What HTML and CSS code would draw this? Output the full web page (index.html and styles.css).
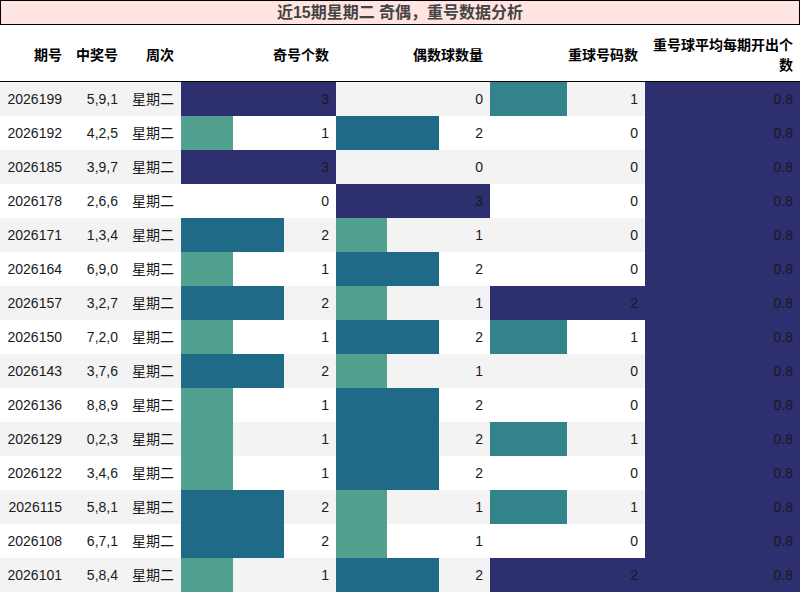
FILE: index.html
```html
<!DOCTYPE html>
<html lang="zh">
<head>
<meta charset="utf-8">
<link rel="stylesheet" href="styles.css">
</head>
<body>
<div class="title">近15期星期二 奇偶，重号数据分析</div>
<table class="grid">
<colgroup>
<col class="w1"><col class="w2"><col class="w3"><col class="w4"><col class="w5"><col class="w6"><col class="w7">
</colgroup>
<thead>
<tr><th>期号</th><th>中奖号</th><th>周次</th><th>奇号个数</th><th>偶数球数量</th><th>重球号码数</th><th>重号球平均每期开出个数</th></tr>
</thead>
<tbody>
<tr><td>2026199</td><td>5,9,1</td><td>星期二</td><td class="bar navy" style="--w:100%">3</td><td>0</td><td class="bar teal" style="--w:50%">1</td><td class="bar navy" style="--w:100%">0.8</td></tr>
<tr><td>2026192</td><td>4,2,5</td><td>星期二</td><td class="bar green" style="--w:33.333%">1</td><td class="bar blue" style="--w:66.667%">2</td><td>0</td><td class="bar navy" style="--w:100%">0.8</td></tr>
<tr><td>2026185</td><td>3,9,7</td><td>星期二</td><td class="bar navy" style="--w:100%">3</td><td>0</td><td>0</td><td class="bar navy" style="--w:100%">0.8</td></tr>
<tr><td>2026178</td><td>2,6,6</td><td>星期二</td><td>0</td><td class="bar navy" style="--w:100%">3</td><td>0</td><td class="bar navy" style="--w:100%">0.8</td></tr>
<tr><td>2026171</td><td>1,3,4</td><td>星期二</td><td class="bar blue" style="--w:66.667%">2</td><td class="bar green" style="--w:33.333%">1</td><td>0</td><td class="bar navy" style="--w:100%">0.8</td></tr>
<tr><td>2026164</td><td>6,9,0</td><td>星期二</td><td class="bar green" style="--w:33.333%">1</td><td class="bar blue" style="--w:66.667%">2</td><td>0</td><td class="bar navy" style="--w:100%">0.8</td></tr>
<tr><td>2026157</td><td>3,2,7</td><td>星期二</td><td class="bar blue" style="--w:66.667%">2</td><td class="bar green" style="--w:33.333%">1</td><td class="bar navy" style="--w:100%">2</td><td class="bar navy" style="--w:100%">0.8</td></tr>
<tr><td>2026150</td><td>7,2,0</td><td>星期二</td><td class="bar green" style="--w:33.333%">1</td><td class="bar blue" style="--w:66.667%">2</td><td class="bar teal" style="--w:50%">1</td><td class="bar navy" style="--w:100%">0.8</td></tr>
<tr><td>2026143</td><td>3,7,6</td><td>星期二</td><td class="bar blue" style="--w:66.667%">2</td><td class="bar green" style="--w:33.333%">1</td><td>0</td><td class="bar navy" style="--w:100%">0.8</td></tr>
<tr><td>2026136</td><td>8,8,9</td><td>星期二</td><td class="bar green" style="--w:33.333%">1</td><td class="bar blue" style="--w:66.667%">2</td><td>0</td><td class="bar navy" style="--w:100%">0.8</td></tr>
<tr><td>2026129</td><td>0,2,3</td><td>星期二</td><td class="bar green" style="--w:33.333%">1</td><td class="bar blue" style="--w:66.667%">2</td><td class="bar teal" style="--w:50%">1</td><td class="bar navy" style="--w:100%">0.8</td></tr>
<tr><td>2026122</td><td>3,4,6</td><td>星期二</td><td class="bar green" style="--w:33.333%">1</td><td class="bar blue" style="--w:66.667%">2</td><td>0</td><td class="bar navy" style="--w:100%">0.8</td></tr>
<tr><td>2026115</td><td>5,8,1</td><td>星期二</td><td class="bar blue" style="--w:66.667%">2</td><td class="bar green" style="--w:33.333%">1</td><td class="bar teal" style="--w:50%">1</td><td class="bar navy" style="--w:100%">0.8</td></tr>
<tr><td>2026108</td><td>6,7,1</td><td>星期二</td><td class="bar blue" style="--w:66.667%">2</td><td class="bar green" style="--w:33.333%">1</td><td>0</td><td class="bar navy" style="--w:100%">0.8</td></tr>
<tr><td>2026101</td><td>5,8,4</td><td>星期二</td><td class="bar green" style="--w:33.333%">1</td><td class="bar blue" style="--w:66.667%">2</td><td class="bar navy" style="--w:100%">2</td><td class="bar navy" style="--w:100%">0.8</td></tr>
</tbody>
</table>
</body>
</html>
```
FILE: styles.css
```css
html, body {
  margin: 0;
  padding: 0;
  background: #ffffff;
}
body {
  width: 800px;
  font-family: "Liberation Sans", "Noto Sans CJK SC", sans-serif;
  font-size: 14px;
  color: #1a1a1a;
}
.title {
  box-sizing: border-box;
  height: 25px;
  border: 1px solid #000;
  background: #ffe4e1;
  text-align: center;
  font-weight: bold;
  font-size: 16px;
  line-height: 23px;
  color: #444;
}
.grid {
  width: 800px;
  table-layout: fixed;
  border-collapse: collapse;
  border-spacing: 0;
}
.w1 { width: 69px; }
.w2 { width: 56px; }
.w3 { width: 56px; }
.w4 { width: 155px; }
.w5 { width: 154px; }
.w6 { width: 155px; }
.w7 { width: 155px; }
.grid th {
  height: 40px;
  padding: 10px 7px 6px 4px;
  text-align: right;
  vertical-align: middle;
  font-weight: bold;
  line-height: 20px;
  color: #000;
  border-bottom: 1px solid #000;
}
.grid td {
  height: 20px;
  padding: 7px 7px 7px 4px;
  line-height: 20px;
  text-align: right;
  white-space: nowrap;
}
.grid tbody tr:nth-child(odd) td {
  background-color: #f3f3f3;
}
.grid td.bar {
  background-image: linear-gradient(90deg, var(--c) var(--w), transparent var(--w));
}
.navy { --c: #2d2f6f; }
.blue { --c: #1f6a87; }
.green { --c: #52a08f; }
.teal { --c: #33848a; }
```
